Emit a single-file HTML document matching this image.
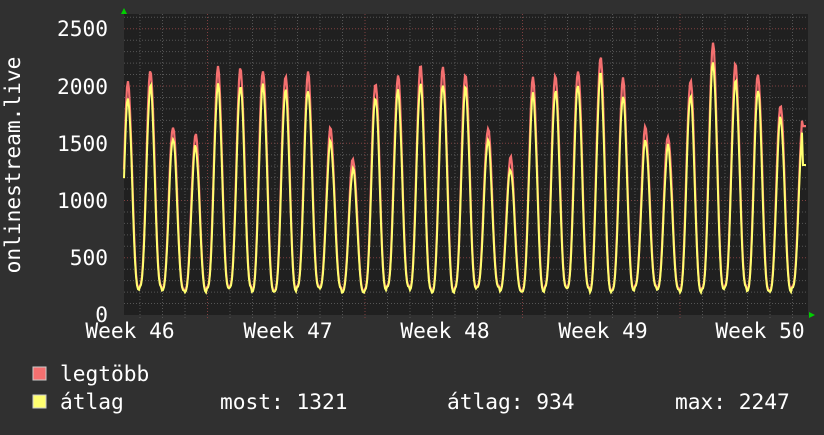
<!DOCTYPE html>
<html><head><meta charset="utf-8"><style>
html,body{margin:0;padding:0;background:#303030;}
body{width:824px;height:430px;overflow:hidden;}
svg text{font-family:"DejaVu Sans Mono","Liberation Mono",monospace;fill:#fff;}
</style></head><body>
<svg id="g" width="824" height="430" xmlns="http://www.w3.org/2000/svg">
<rect width="824" height="430" fill="#303030"/>
<rect x="124" y="14" width="684" height="301" fill="#202020"/>
<g id="grid"></g>
<path id="red" fill="none" stroke="#f47070" stroke-width="2.2"/>
<path id="yel" fill="none" stroke="#ffff70" stroke-width="2"/>
<polygon points="121,14 127,14 124,8" fill="#00d000"/>
<polygon points="809,312 809,318 815,315" fill="#00d000"/>
<g font-size="21.2" text-anchor="end">
<text x="108" y="36">2500</text>
<text x="108" y="94">2000</text>
<text x="108" y="151">1500</text>
<text x="108" y="208">1000</text>
<text x="108" y="265">500</text>
<text x="108" y="322">0</text>
</g>
<text font-size="21.2" transform="translate(20,165) rotate(-90)" text-anchor="middle">onlinestream.live</text>
<g font-size="21.2" text-anchor="middle">
<text x="130" y="338">Week 46</text>
<text x="288" y="338">Week 47</text>
<text x="445" y="338">Week 48</text>
<text x="603" y="338">Week 49</text>
<text x="760" y="338">Week 50</text>
</g>
<rect x="33" y="367" width="13" height="13" fill="#f47070" stroke="#ccc" stroke-width="1"/>
<rect x="33" y="395" width="13" height="13" fill="#ffff70" stroke="#ccc" stroke-width="1"/>
<g font-size="21.2">
<text x="60" y="381">legtöbb</text>
<text x="60" y="409">átlag</text>
<text x="220" y="409">most: 1321</text>
<text x="447" y="409">átlag: 934</text>
<text x="675" y="409">max: 2247</text>
</g>
</svg>
<script>
var ns="http://www.w3.org/2000/svg",g=document.getElementById('grid');
function ln(x1,y1,x2,y2,c){var l=document.createElementNS(ns,'line');l.setAttribute('x1',x1);l.setAttribute('y1',y1);l.setAttribute('x2',x2);l.setAttribute('y2',y2);l.setAttribute('stroke',c);l.setAttribute('stroke-width',1);l.setAttribute('stroke-dasharray','1,2');g.appendChild(l);}
function Y(v){return 315-v*57.25/500;}
for(var v=100;v<=2800;v+=100){var y=Y(v);if(y<14)break;ln(124,y,808,y,v%500==0?'#804040':'#555');}
for(var x=140;x<808;x+=22.5){var maj=Math.abs(((x-207.5)/157.5)-Math.round((x-207.5)/157.5))<0.01;ln(x,14,x,318,maj?'#804040':'#555');}
var peaks=[2020,2140,1660,1580,2150,2150,2150,2100,2110,1620,1370,2040,2090,2160,2160,2120,1640,1370,2060,2100,2150,2250,2050,1640,1580,2060,2360,2180,2110,1850,1760];
var r='',yv='';
for(var x=124;x<=806;x+=1){
 var t=(x-128)/22.5+0.5; var d=Math.floor(t); var p=t-d;
 var pk=peaks[Math.max(0,Math.min(peaks.length-1,d))];
 var s=0.5+0.5*Math.cos(Math.PI*2*(p-0.5)); s=Math.pow(s,1.6);
 var lo=230+25*Math.sin(d*1.7);
 var v=lo+(pk-lo)*s+25*Math.sin(x*0.9)*s;
 var w=lo-10+(pk*0.94-lo)*s+20*Math.sin(x*1.3)*s;
 if(x>802){v=1650;w=1310;}
 r+=(r?'L':'M')+x.toFixed(1)+','+Y(v).toFixed(1);
 yv+=(yv?'L':'M')+x.toFixed(1)+','+Y(w).toFixed(1);
}
document.getElementById('red').setAttribute('d',r);
document.getElementById('yel').setAttribute('d',yv);
</script>
</body></html>
